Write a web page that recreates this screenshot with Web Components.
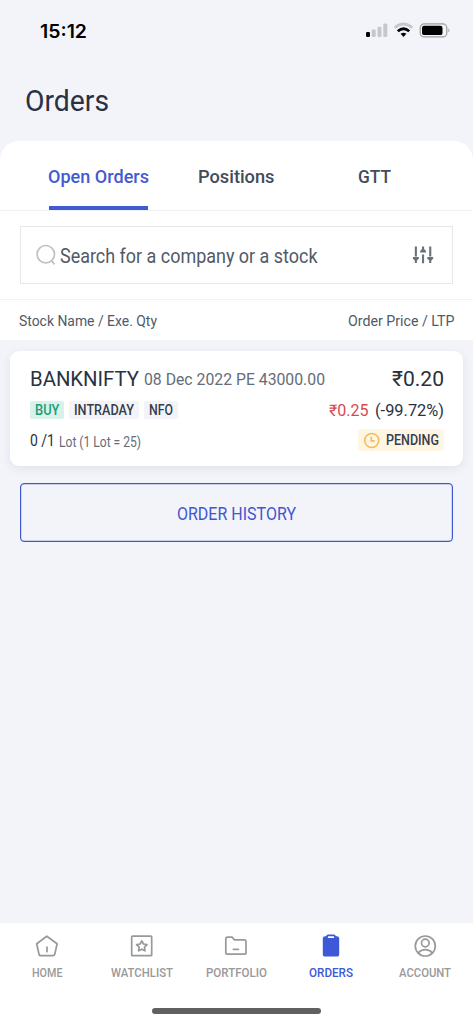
<!DOCTYPE html>
<html lang="en">
<head>
<meta charset="utf-8">
<title>Orders</title>
<style>
html,body{margin:0;height:100%}
body{font-family:Roboto,"Liberation Sans",sans-serif;background:#f3f4fa;color:#2a3142}
</style>
</head>
<body>
<orders-app></orders-app>
<script>
const define = (name, html, after) => {
  const tpl = document.createElement('template');
  tpl.innerHTML = html;
  customElements.define(name, class extends HTMLElement {
    connectedCallback() {
      if (this.shadowRoot) return;
      this.attachShadow({ mode: 'open' }).append(tpl.content.cloneNode(true));
      if (after) after(this, this.shadowRoot);
    }
  });
};

/* A single line of text condensed or widened to the width in its "w" attribute. */
define('fit-text', `
<style>
:host{display:block;flex:none;white-space:nowrap;line-height:20px;height:20px}
span{display:inline-block;transform-origin:0 50%}
</style><span><slot></slot></span>`, (el, root) => {
  const w = +el.getAttribute('w'), s = root.querySelector('span');
  el.style.width = w + 'px';
  el.style.fontSize = el.getAttribute('size') + 'px';
  requestAnimationFrame(() => {
    s.style.transform = 'none';
    const n = s.getBoundingClientRect().width;
    if (n) s.style.transform = 'scaleX(' + w / n + ')';
  });
});

define('status-bar', `
<style>
:host{display:flex;height:61px;box-sizing:border-box;padding:0 22px 0 40px;align-items:center;justify-content:space-between;color:#000}
fit-text{font-family:Inter,sans-serif;font-weight:600}
svg{display:block}
</style>
<fit-text w="47" size="18.5">15:12</fit-text>
<svg width="86" height="18" viewBox="0 0 86 18">
 <rect x="1" y="10" width="4" height="5" rx="1.2"/>
 <g fill="#c6c7cb"><rect x="6.7" y="7.5" width="4" height="7.5" rx="1.2"/><rect x="12.5" y="4.7" width="4" height="10.3" rx="1.2"/><rect x="18.3" y="1.5" width="4" height="13.5" rx="1.2"/></g>
 <path d="M29.7 5.8Q38.5-1.8 47.3 5.8" fill="none" stroke="#c6c7cb" stroke-width="2.7"/>
 <path d="M32.8 9.2Q38.5 4.3 44.2 9.2" fill="none" stroke="#000" stroke-width="2.8"/>
 <path d="M35.6 11.8Q38.5 9.6 41.4 11.8L38.5 14.9Z"/>
 <rect x="55.2" y="1.9" width="26.6" height="13" rx="4" fill="none" stroke="#9b9ca1" stroke-width="1.2"/>
 <rect x="57" y="3.7" width="20.5" height="9.4" rx="2.2"/>
 <path d="M83.4 6.2Q85.4 8.4 83.4 10.6Z" fill="#9b9ca1"/>
</svg>`);

define('tab-item', `
<style>
:host{display:flex;flex-direction:column;justify-content:space-between;box-sizing:border-box;height:69px;padding-top:26px;font-weight:500;color:#414b5b}
:host([active]){color:#435ad2}
i{height:4px;margin:0 1px}
:host([active]) i{background:#4059d6}
</style><slot></slot><i></i>`);

define('search-box', `
<style>
:host{display:flex;align-items:center;box-sizing:border-box;height:58px;border:1px solid #e6e7eb;padding:0 17px 0 15px;background:#fff;color:#505a68}
fit-text{flex:none;margin:4px auto 0 3px}
svg{display:block}
</style>
<svg width="21" height="22" viewBox="0 0 21 22" fill="none" stroke="#bfc1c6" stroke-width="1.7"><circle cx="9.8" cy="10.2" r="8.7"/><path d="M15.4 16.5L18.5 20.4"/></svg>
<fit-text w="257.5" size="19.3"><slot></slot></fit-text>
<svg width="24" height="22" viewBox="0 0 24 22" fill="#6b7079"><path d="M3.8 2.4h2.1v10.2h-2.1zM11 10.4h2.1v8.8h-2.1zM18.2 2.4h2.1v10.2h-2.1zM11 2.4h2.1v3h-2.1z"/><path d="M1.9 13.1h5.9v1.7l-1.9 1.7v2.5h-2.1v-2.5l-1.9-1.7zM16.3 13.1h5.9v1.7l-1.9 1.7v2.5h-2.1v-2.5l-1.9-1.7zM9.1 8.6h5.9v-1.7l-1.9-1.9h-2.1l-1.9 1.9z"/></svg>`);

define('tag-chip', `
<style>
:host{display:flex;align-items:center;box-sizing:border-box;height:18px;padding:0 5px;border-radius:2px;background:#f3f4fa;color:#353d4c;font-weight:500}
:host([kind=buy]){background:#d8f1ea;color:#1c9d78}
:host([kind=pending]){height:22px;background:#fff5e3;gap:6px;border-radius:3px}
</style><slot></slot>`);

define('order-card', `
<style>
:host{display:grid;grid-template-rows:28px 34px 26px;margin:11px 10px 0;box-sizing:border-box;height:115px;padding:14px 19.5px 0 19.5px;background:#fff;border-radius:9px;box-shadow:0 3px 10px rgba(40,50,90,.09)}
.row,.l,.r{display:flex;align-items:center}
.row{justify-content:space-between}
.l{gap:5px}.r{gap:6px;margin-top:2px}
.m{color:#656d79;font-weight:400}
.red{color:#d94a4e}
svg{display:block}
</style>
<div class="row"><div class="l"><fit-text w="109" size="21">BANKNIFTY</fit-text><fit-text class="m" w="181" size="17">08 Dec 2022 PE 43000.00</fit-text></div><fit-text w="52" size="21">₹0.20</fit-text></div>
<div class="row"><div class="l"><tag-chip kind="buy"><fit-text w="24.5" size="14">BUY</fit-text></tag-chip><tag-chip><fit-text w="60" size="14">INTRADAY</fit-text></tag-chip><tag-chip><fit-text w="24" size="14">NFO</fit-text></tag-chip></div>
<div class="r"><fit-text class="red" w="39.5" size="16">₹0.25</fit-text><fit-text w="69" size="16">(-99.72%)</fit-text></div></div>
<div class="row"><div class="l" style="margin-top:2px"><fit-text w="25" size="16.5">0 /1</fit-text><fit-text class="m" w="82" size="14" style="margin:1px 0 0 -1px">Lot (1 Lot = 25)</fit-text></div>
<tag-chip kind="pending"><svg width="17" height="17" viewBox="0 0 17 17" fill="none" stroke="#f7bb55" stroke-width="1.6"><circle cx="8.7" cy="8.5" r="7"/><path d="M8.3 4.8v4.1h3.4"/></svg><fit-text w="53" size="14">PENDING</fit-text></tag-chip></div>`);

define('outline-button', `
<style>
:host{display:flex;align-items:center;justify-content:center;box-sizing:border-box;height:59px;margin:17px 20px 0;border:1px solid #4058ce;box-shadow:inset 0 0 0 .2px #4058ce;border-radius:4px;color:#4257cf}
fit-text{margin:2px 1px 0 0}
</style><fit-text w="119" size="17.5"><slot></slot></fit-text>`);

define('nav-item', `
<style>
:host{flex:1 1 0;display:flex;flex-direction:column;align-items:center;gap:5px;color:#999;font-weight:500}
:host([active]){color:#3e59d8}
</style><slot name="icon"></slot><slot></slot>`);

define('bottom-nav', `
<style>
:host{display:flex;flex-direction:column;align-items:center;background:#fff;height:101px;box-sizing:border-box;padding-top:11px}
nav{display:flex;align-self:stretch;height:74px}
svg{display:block;fill:none;stroke:currentColor;stroke-width:1.7;stroke-linejoin:round;stroke-linecap:round}
fit-text{height:20px}
i{width:169px;height:6px;border-radius:3px;background:#606060}
</style>
<nav>
<nav-item><svg slot="icon" width="24" height="24"><path d="M11.8 2.2L1.7 9.7 4 20.2Q4.3 21.7 5.8 21.7H18Q19.5 21.7 19.8 20.2L22.1 9.7Z"/><path d="M12 13.2v4.5"/></svg><fit-text w="30.5" size="12.5">HOME</fit-text></nav-item>
<nav-item><svg slot="icon" width="24" height="24"><rect x="1.7" y="2.2" width="20" height="19.5" rx=".8"/><path d="M11.8 6.8l1.7 3.2 3.5.6-2.5 2.5.5 3.7-3.2-1.6-3.2 1.6.5-3.7-2.5-2.5 3.5-.6Z"/></svg><fit-text w="62" size="12.5">WATCHLIST</fit-text></nav-item>
<nav-item><svg slot="icon" width="24" height="24"><path d="M3.6 3.2H8l2.5 2.7H20.2Q22 5.9 22 7.7V18.4Q22 20.2 20.2 20.2H3.6Q1.8 20.2 1.8 18.4V5Q1.8 3.2 3.6 3.2Z"/><path d="M9.4 15.3h5"/></svg><fit-text w="61" size="12.5">PORTFOLIO</fit-text></nav-item>
<nav-item active><svg slot="icon" width="24" height="24"><path d="M6.2 2.2H7.2Q7.5.5 9 .5H15Q16.5.5 16.8 2.2H17.8Q20.2 2.2 20.2 4.6V20Q20.2 22.6 17.8 22.6H6.2Q3.8 22.6 3.8 20V4.6Q3.8 2.2 6.2 2.2Z" fill="currentColor" stroke="none"/><path d="M9.2 2.2H14.8L15.2 4H8.8Z" fill="#fff" stroke="none"/></svg><fit-text w="44" size="12.5">ORDERS</fit-text></nav-item>
<nav-item><svg slot="icon" width="24" height="24"><circle cx="11.3" cy="12" r="10"/><circle cx="11.3" cy="9" r="3.8"/><path d="M4.1 19Q7 15.6 11.3 15.6T18.5 19"/></svg><fit-text w="52" size="12.5" style="margin-left:-1px">ACCOUNT</fit-text></nav-item>
</nav><i></i>`);

define('orders-app', `
<style>
:host{display:flex;flex-direction:column;width:473px;height:1024px;background:#f3f4fa;overflow:hidden}
h1{margin:0;font-weight:400;height:80px;box-sizing:border-box;padding:30px 0 0 25px;flex:none}
.panel{background:#fff;border-radius:19px 19px 0 0;height:199px;flex:none}
.tabs{display:flex;padding-left:47.5px;gap:49px;border-bottom:1px solid #f0f1f5;height:69px}
.tabs tab-item:last-child{margin-left:34.5px}
.search{padding:15px 20px;border-bottom:1px solid #f1f2f5}
.heads{display:flex;justify-content:space-between;align-items:center;height:40px;padding:2px 19px 0 18.5px;box-sizing:border-box;color:#505a68}
bottom-nav{margin-top:auto}
</style>
<status-bar></status-bar>
<h1><fit-text w="84" size="29.5">Orders</fit-text></h1>
<section class="panel">
<div class="tabs"><tab-item active><fit-text w="101" size="19">Open Orders</fit-text></tab-item><tab-item><fit-text w="76.5" size="19">Positions</fit-text></tab-item><tab-item><fit-text w="33" size="19">GTT</fit-text></tab-item></div>
<div class="search"><search-box>Search for a company or a stock</search-box></div>
<div class="heads"><fit-text w="138" size="15">Stock Name / Exe. Qty</fit-text><fit-text w="106.5" size="15">Order Price / LTP</fit-text></div>
</section>
<order-card></order-card>
<outline-button>ORDER HISTORY</outline-button>
<bottom-nav></bottom-nav>`);
</script>
</body>
</html>
